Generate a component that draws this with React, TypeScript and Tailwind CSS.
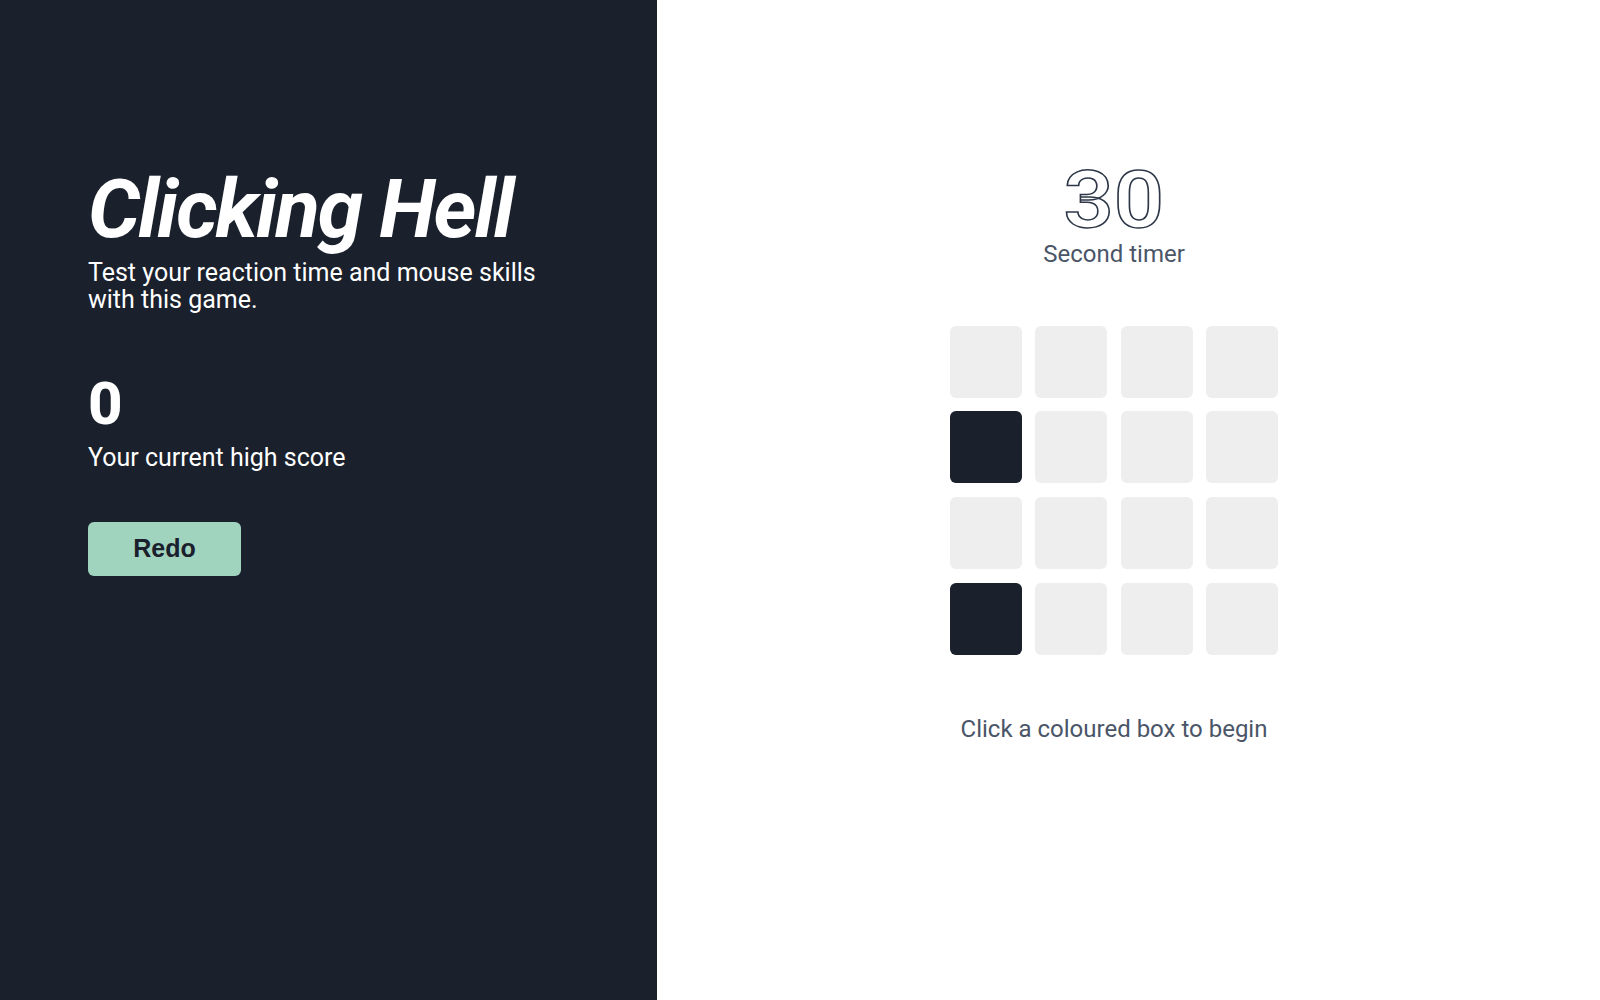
import React from 'react';

const tiles = [0, 0, 0, 0, 1, 0, 0, 0, 0, 0, 0, 0, 1, 0, 0, 0];

const App: React.FC = () => {
  return (
    <div className="flex w-full h-screen font-['Roboto',sans-serif]">
      <div className="w-[657px] shrink-0 bg-[#1a202c] text-white pl-[88px] pt-[160px]">
        <h1 className="text-[82px] leading-none font-bold italic tracking-[-2px] pt-[8px]">Clicking Hell</h1>
        <p className="text-[25px] leading-[27px] font-normal w-[480px] mt-[9px]">
          Test your reaction time and mouse skills with this game.
        </p>
        <div className="text-[60px] leading-none font-extrabold mt-[61px]">0</div>
        <p className="text-[25px] leading-[36px] font-normal mt-[6px]">Your current high score</p>
        <button className="mt-[46px] w-[153px] h-[54px] rounded-[6px] bg-[#a1d4bf] text-[#1a202c] text-[25px] font-bold font-['Liberation_Sans',Arial,sans-serif]">
          Redo
        </button>
      </div>
      <div className="flex-1 bg-white flex flex-col items-center pr-[29px] pt-[160px]">
        <div
          className="text-[80px] leading-none font-semibold text-transparent scale-x-110"
          style={{ WebkitTextStroke: '1.5px #2d3748' }}
        >
          30
        </div>
        <p className="text-[24px] leading-[1.2] font-normal text-[#4a5568]">Second timer</p>
        <div className="grid grid-cols-[repeat(4,72px)] gap-[13.6px] mt-[57px]">
          {tiles.map((t, i) => (
            <div
              key={i}
              className={t ? 'w-[72px] h-[72px] rounded-[6px] bg-[#1a202c]' : 'w-[72px] h-[72px] rounded-[6px] bg-[#eeeeee]'}
            />
          ))}
        </div>
        <p className="text-[24px] font-normal text-[#4a5568] mt-[56px]">Click a coloured box to begin</p>
      </div>
    </div>
  );
};

export default App;
